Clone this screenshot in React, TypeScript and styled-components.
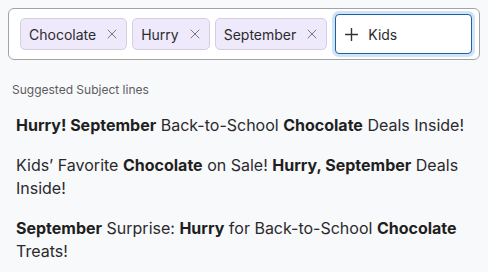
import React from "react";
import styled, { createGlobalStyle } from "styled-components";

const Global = createGlobalStyle`
  html, body { margin: 0; padding: 0; background: #f8f9fb; }
  body { font-family: Inter, "Noto Sans", sans-serif; color: #222; }
`;

const Page = styled.div`
  padding: 8px;
  display: flex;
  flex-direction: column;
`;

const TagBox = styled.div`
  display: flex;
  align-items: center;
  gap: 5px;
  height: 52px;
  box-sizing: border-box;
  padding: 0 7px 0 11px;
  border: 1px solid #a3a3a6;
  border-radius: 6px;
  background: #ffffff;
`;

const Chip = styled.div`
  display: flex;
  align-items: center;
  gap: 11px;
  height: 32px;
  box-sizing: border-box;
  padding: 0 9px 0 8px;
  border: 1px solid #d4cee2;
  border-radius: 5px;
  background: #efe9fc;
  font-size: 14px;
  color: #2b2b2e;
`;

const Remove = styled.span`
  display: flex;
  color: #77777c;
`;

const AddInput = styled.div`
  margin-left: 3px;
  flex: 1;
  display: flex;
  align-items: center;
  gap: 10px;
  height: 40px;
  box-sizing: border-box;
  padding: 0 9px;
  border: 1.5px solid #1f5fa6;
  border-radius: 4px;
  background: #fff;
  box-shadow: 0 0 0 3px #cfe4f5;
  font-size: 14px;
  color: #2b2b2e;
`;

const Label = styled.div`
  margin: 22px 0 0 4px;
  font-size: 12px;
  color: #5c5c60;
`;

const List = styled.div`
  display: flex;
  flex-direction: column;
  gap: 16px;
  margin: 17px 0 0 8px;
`;

const Line = styled.p`
  margin: 0;
  font-size: 16px;
  line-height: 23.5px;
  color: #2a2a2d;
`;

const B = styled.b`
  font-weight: 700;
  color: #1f1f22;
`;

const X = () => (
  <svg width="10" height="10" viewBox="0 0 10 10">
    <path d="M1 1 L9 9 M9 1 L1 9" stroke="currentColor" strokeWidth="1" strokeLinecap="round" />
  </svg>
);

const Plus = () => (
  <svg width="13" height="13" viewBox="0 0 13 13">
    <path d="M6.5 0.5 V12.5 M0.5 6.5 H12.5" stroke="#333" strokeWidth="1.4" strokeLinecap="round" />
  </svg>
);

const tags = ["Chocolate", "Hurry", "September"];

export default function App() {
  return (
    <>
      <Global />
      <Page>
        <TagBox>
          {tags.map((t) => (
            <Chip key={t}>
              {t}
              <Remove><X /></Remove>
            </Chip>
          ))}
          <AddInput>
            <Plus />
            Kids
          </AddInput>
        </TagBox>
        <Label>Suggested Subject lines</Label>
        <List>
          <Line>
            <B>Hurry! September</B> Back-to-School <B>Chocolate</B> Deals Inside!
          </Line>
          <Line>
            Kids’ Favorite <B>Chocolate</B> on Sale! <B>Hurry, September</B> Deals Inside!
          </Line>
          <Line>
            <B>September</B> Surprise: <B>Hurry</B> for Back-to-School <B>Chocolate</B> Treats!
          </Line>
        </List>
      </Page>
    </>
  );
}
